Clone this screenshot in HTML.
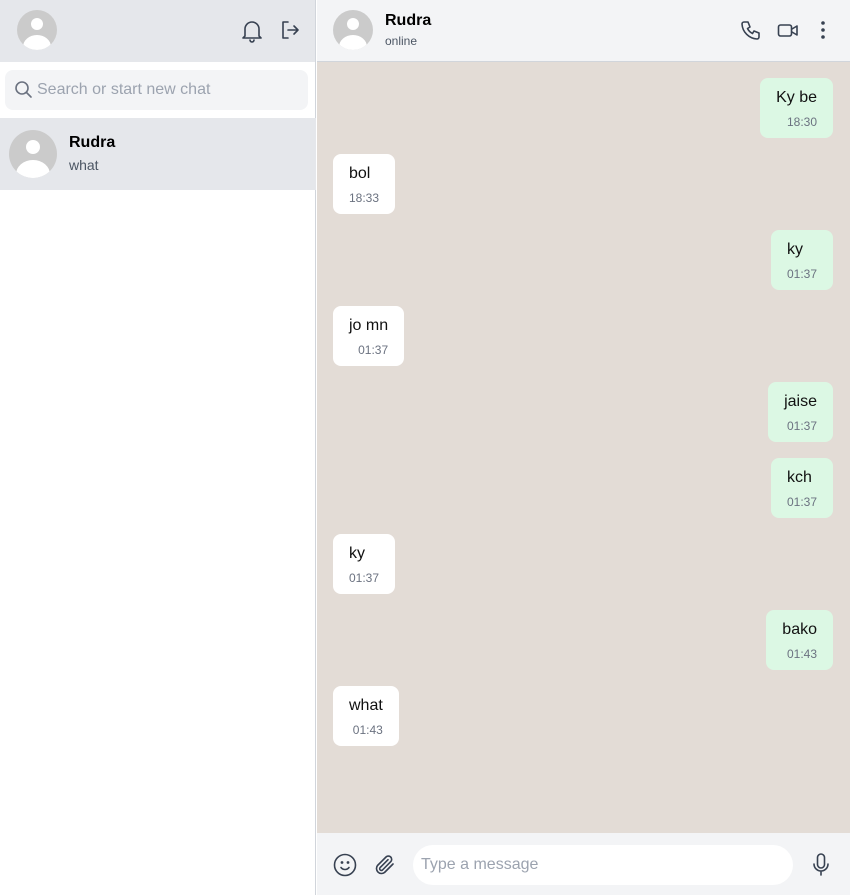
<!DOCTYPE html>
<html><head><meta charset="utf-8"><style>
*{box-sizing:border-box;margin:0;padding:0}
body{width:850px;height:895px;overflow:hidden;font-family:"Liberation Sans",sans-serif;position:relative;background:#fff}
.side{position:absolute;left:0;top:0;width:316px;height:895px;background:#fff;border-right:1px solid #d1d5db}
.sh{height:62px;background:#e5e7eb;position:relative}
.av{position:absolute;border-radius:50%;background:#cbcbcb;overflow:hidden}
.av:before{content:"";position:absolute;left:35%;top:20%;width:30%;height:30%;border-radius:50%;background:#fff}
.av:after{content:"";position:absolute;left:15%;top:62%;width:70%;height:60%;border-radius:50%;background:#fff}
.search{position:absolute;left:5px;top:70px;width:303px;height:40px;background:#f3f4f6;border-radius:8px;color:#9ca3af;font-size:16px;line-height:40px;padding-left:32px}
.item{position:absolute;left:0;top:118px;width:316px;height:72px;background:#e5e7eb}
.main{position:absolute;left:317px;top:0;width:533px;height:895px;background:#e3dcd6}
.ch{height:62px;background:#f3f4f6;border-bottom:1px solid #d1d5db;position:relative}
.m{position:absolute;height:60px;border-radius:8px;padding:8px 16px;font-size:16px;color:#111}
.m .t{line-height:24px}
.m .ti{font-size:12px;color:#6b7280;line-height:16px;margin-top:4px;text-align:right}
.s{background:#dcf8e4;right:17px}
.r{background:#fff;left:16px}
.foot{position:absolute;left:0;top:833px;width:533px;height:62px;background:#f3f4f6}
.inp{position:absolute;left:96px;top:12px;width:380px;height:40px;background:#fff;border-radius:20px;color:#9ca3af;font-size:16px;line-height:40px;padding-left:8px}
svg{position:absolute;fill:none;stroke:#374151;stroke-width:1.6;stroke-linecap:round;stroke-linejoin:round}
</style></head><body>
<div class="side">
 <div class="sh">
  <div class="av" style="left:17px;top:10px;width:40px;height:40px"></div>
  <svg style="left:241px;top:19px" width="22" height="24" viewBox="0 0 22 24"><path d="M4 17V10a7 7 0 0 1 14 0v7l2 2H2z"/><path d="M9 21a2 2 0 0 0 4 0"/></svg>
  <svg style="left:280px;top:20px" width="20" height="20" viewBox="0 0 20 20"><path d="M8 2H3v16h5"/><path d="M8 10h10M14 6l4 4-4 4"/></svg>
 </div>
 <div class="search">Search or start new chat</div>
 <svg style="left:14px;top:80px;stroke:#6b7280" width="20" height="20" viewBox="0 0 20 20"><circle cx="8" cy="8" r="6"/><path d="M12.5 12.5l4.5 4.5"/></svg>
 <div class="item">
  <div class="av" style="left:9px;top:12px;width:48px;height:48px"></div>
  <div style="position:absolute;left:69px;top:16px;font-weight:bold;font-size:16px;color:#000">Rudra</div>
  <div style="position:absolute;left:69px;top:39px;font-size:14px;color:#4b5563">what</div>
 </div>
</div>
<div class="main">
 <div class="ch">
  <div class="av" style="left:16px;top:10px;width:40px;height:40px"></div>
  <div style="position:absolute;left:68px;top:12px;font-weight:bold;font-size:16px;color:#000">Rudra</div>
  <div style="position:absolute;left:68px;top:34px;font-size:12px;color:#4b5563">online</div>
  <svg style="left:423px;top:20px" width="22" height="22" viewBox="0 0 22 22"><path d="M4 2h4l2 5-2.5 1.5a11 11 0 0 0 5 5L14 11l5 2v4a2 2 0 0 1-2 2A16 16 0 0 1 2 4a2 2 0 0 1 2-2z"/></svg>
  <svg style="left:460px;top:21px" width="22" height="20" viewBox="0 0 22 20"><rect x="1.5" y="4" width="13" height="11" rx="2"/><path d="M15 8l5-3v9l-5-3"/></svg>
  <svg style="left:500px;top:20px;fill:#374151;stroke:none" width="12" height="22" viewBox="0 0 12 22"><circle cx="6" cy="3" r="1.8"/><circle cx="6" cy="10" r="1.8"/><circle cx="6" cy="17" r="1.8"/></svg>
 </div>
 <div class="m s" style="top:78px"><div class="t">Ky be</div><div class="ti">18:30</div></div>
 <div class="m r" style="top:154px"><div class="t">bol</div><div class="ti">18:33</div></div>
 <div class="m s" style="top:230px"><div class="t">ky</div><div class="ti">01:37</div></div>
 <div class="m r" style="top:306px"><div class="t">jo mn</div><div class="ti">01:37</div></div>
 <div class="m s" style="top:382px"><div class="t">jaise</div><div class="ti">01:37</div></div>
 <div class="m s" style="top:458px"><div class="t">kch</div><div class="ti">01:37</div></div>
 <div class="m r" style="top:534px"><div class="t">ky</div><div class="ti">01:37</div></div>
 <div class="m s" style="top:610px"><div class="t">bako</div><div class="ti">01:43</div></div>
 <div class="m r" style="top:686px"><div class="t">what</div><div class="ti">01:43</div></div>
 <div class="foot">
  <svg style="left:16px;top:20px" width="24" height="24" viewBox="0 0 24 24"><circle cx="12" cy="12" r="10.5"/><path d="M8 14.5a5 5 0 0 0 8 0"/><circle cx="9" cy="9.5" r=".6" fill="#374151"/><circle cx="15" cy="9.5" r=".6" fill="#374151"/></svg>
  <svg style="left:56px;top:20px" width="24" height="24" viewBox="0 0 24 24"><path d="M20 11l-8.5 8.5a5 5 0 0 1-7-7L13 4a3.3 3.3 0 0 1 4.7 4.7L9.5 17a1.7 1.7 0 0 1-2.4-2.4L15 6.7"/></svg>
  <div class="inp">Type a message</div>
  <svg style="left:494px;top:19px" width="20" height="26" viewBox="0 0 20 26"><rect x="6.5" y="2" width="7" height="14" rx="3.5"/><path d="M3 12a7 7 0 0 0 14 0M10 19v4"/></svg>
 </div>
</div>
</body></html>
